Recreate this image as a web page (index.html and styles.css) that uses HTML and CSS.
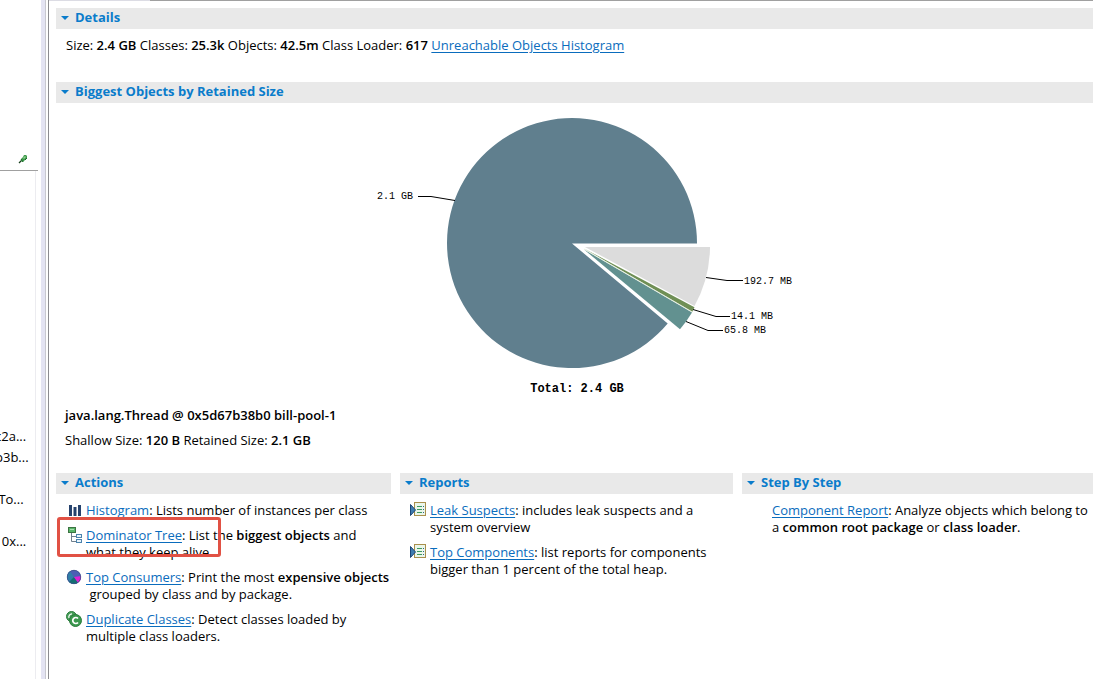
FILE: index.html
```html
<!DOCTYPE html>
<html lang="en">
<head>
<meta charset="utf-8">
<title>Heap Overview</title>
<link rel="stylesheet" href="styles.css">
</head>
<body>
<div class="workbench">
  <aside class="side">
    <div class="side-top">
      <svg class="pin" viewBox="0 0 10 10" width="10" height="10" aria-hidden="true">
        <path d="M1 9L4 6" stroke="#173f1c" stroke-width="1.2"/>
        <path d="M3 5L5 3L6 1L8 1L9 2L9 4L7 6L5 8L3 7Z" fill="#3f9a4c"/>
        <path d="M5 4L7 2L8 3L6 5Z" fill="#8fd08f"/>
        <path d="M3 5L5 8M9 4L7 6" stroke="#1c6a2a" fill="none"/>
      </svg>
    </div>
    <ul class="side-list">
      <li>c2a...</li>
      <li>p3b...</li>
      <li></li>
      <li>&nbsp;To...</li>
      <li></li>
      <li>&nbsp;&nbsp;0x...</li>
    </ul>
  </aside>
  <div class="sash"></div>
  <main class="main">
    <section>
      <h2 class="bar"><button class="toggle" type="button"><span class="tri"></span>Details</button></h2>
      <p class="summary">Size: <b>2.4 GB</b> Classes: <b>25.3k</b> Objects: <b>42.5m</b> Class Loader: <b>617</b> <a href="#">Unreachable Objects Histogram</a></p>
    </section>
    <section>
      <h2 class="bar"><button class="toggle" type="button"><span class="tri"></span>Biggest Objects by Retained Size</button></h2>
      <svg class="chart" viewBox="315 110 519 290" width="519" height="290" role="img" aria-label="Biggest objects by retained size">
        <path d="M572 243.500H697A125 125 0 1 0 667.700 323.500Z" fill="#607f8e"/>
        <path d="M585 247H710A125 125 0 0 1 694.500 306Z" fill="#dcdcdc"/>
        <path d="M584 248.500L694.500 307.300L692.300 311.800Z" fill="#6f8f55"/>
        <path d="M584 249.500L692 312.500A125 125 0 0 1 680 329.300Z" fill="#629190"/>
        <path d="M584 249L692.300 312" stroke="#e3eedb" stroke-width=".7"/>
        <g class="leads">
          <path d="M418 196.500H431L455 200.500"/>
          <path d="M706 277.500L727 280.500H743"/>
          <path d="M693 309.500L716 316.500H730"/>
          <path d="M686 321.500L708 330.500H723"/>
        </g>
        <g class="labels">
          <text x="377" y="199">2.1 GB</text>
          <text x="744" y="284">192.7 MB</text>
          <text x="731" y="319">14.1 MB</text>
          <text x="724" y="333">65.8 MB</text>
        </g>
        <text class="total" x="577" y="392">Total: 2.4 GB</text>
      </svg>
      <p class="object"><b>java.lang.Thread @ 0x5d67b38b0 bill-pool-1</b></p>
      <p class="object">Shallow Size: <b>120 B</b> Retained Size: <b>2.1 GB</b></p>
    </section>
    <div class="columns">
      <section>
        <h2 class="bar"><button class="toggle" type="button"><span class="tri"></span>Actions</button></h2>
        <ul class="links">
          <li>
            <svg class="icon" viewBox="0 0 16 16" aria-hidden="true"><path d="M3 3h3v11H3zM7.500 5h3v9h-3zM12 3h3v11h-3z" fill="#26426d"/></svg>
            <p><a href="#">Histogram</a>: Lists number of instances per class</p>
          </li>
          <li>
            <svg class="icon" viewBox="0 0 16 16" aria-hidden="true">
              <path d="M5.500 6V14.500H10M5.500 9.500H10" fill="none" stroke="#6f7f8d"/>
              <rect x="2.500" y=".5" width="7" height="5" fill="#58b568" stroke="#3c7342"/>
              <path d="M4 2h4v1H4z" fill="#a6dfae"/>
              <rect x="10.500" y="7.500" width="5" height="3" fill="#e8f3fb" stroke="#4c83ad"/>
              <rect x="10.500" y="12.500" width="5" height="3" fill="#e8f3fb" stroke="#4c83ad"/>
            </svg>
            <p><a href="#">Dominator Tree</a>: List the <b>biggest objects</b> and<br>what they keep alive.</p>
            <span class="highlight"></span>
          </li>
          <li>
            <svg class="icon" viewBox="0 0 16 16" aria-hidden="true">
              <circle cx="8" cy="8" r="7" fill="#4c5fb4"/>
              <path d="M8 8L4 2.300A7 7 0 0 0 4 13.700Z" fill="#2f7fa9"/>
              <path d="M8 8L3 13A7 7 0 0 0 12 13.700Z" fill="#146d72"/>
              <path d="M8 8L15 7A7 7 0 0 1 12 13.700Z" fill="#e020d4"/>
              <circle cx="8" cy="8" r="6.700" fill="none" stroke="#3c4f86" stroke-width=".8"/>
            </svg>
            <p><a href="#">Top Consumers</a>: Print the most <b>expensive objects</b><br>&nbsp;grouped by class and by package.</p>
          </li>
          <li>
            <svg class="icon" viewBox="0 0 16 16" aria-hidden="true">
              <circle cx="5.500" cy="5.500" r="5" fill="#48a05a" stroke="#2b7c3d"/>
              <path d="M3 7A3.200 3.200 0 0 1 6 2.800" fill="none" stroke="#fff" stroke-width="1.200"/>
              <circle cx="9.500" cy="9.500" r="6" fill="#3b984e" stroke="#2b7c3d"/>
              <path d="M12 7.500A3 3 0 1 0 12 11.500" fill="none" stroke="#fff" stroke-width="1.700"/>
            </svg>
            <p><a href="#">Duplicate Classes</a>: Detect classes loaded by<br>multiple class loaders.</p>
          </li>
        </ul>
      </section>
      <section>
        <h2 class="bar"><button class="toggle" type="button"><span class="tri"></span>Reports</button></h2>
        <ul class="links">
          <li>
            <svg class="icon" viewBox="0 0 16 16" aria-hidden="true">
              <rect x="4.500" y=".5" width="11" height="13" fill="#eaf6ea" stroke="#a98f4c"/>
              <path d="M7 4.500h5M7 7.500h5M7 10.500h5" stroke="#3f9a5e"/><path d="M13 4.500h1M13 7.500h1M13 10.500h1" stroke="#315f8d"/>
              <path d="M.5 2.500V13.500L5.500 8Z" fill="#3f7db0" stroke="#1d4777"/>
            </svg>
            <p><a href="#">Leak Suspects</a>: includes leak suspects and a<br>system overview</p>
          </li>
          <li>
            <svg class="icon" viewBox="0 0 16 16" aria-hidden="true">
              <rect x="4.500" y=".5" width="11" height="13" fill="#eaf6ea" stroke="#a98f4c"/>
              <path d="M7 4.500h5M7 7.500h5M7 10.500h5" stroke="#3f9a5e"/><path d="M13 4.500h1M13 7.500h1M13 10.500h1" stroke="#315f8d"/>
              <path d="M.5 2.500V13.500L5.500 8Z" fill="#3f7db0" stroke="#1d4777"/>
            </svg>
            <p><a href="#">Top Components</a>: list reports for components<br>bigger than 1 percent of the total heap.</p>
          </li>
        </ul>
      </section>
      <section>
        <h2 class="bar"><button class="toggle" type="button"><span class="tri"></span>Step By Step</button></h2>
        <ul class="links">
          <li>
            <span class="icon"></span>
            <p><a href="#">Component Report</a>: Analyze objects which belong to<br>a <b>common root package</b> or <b>class loader</b>.</p>
          </li>
        </ul>
      </section>
    </div>
  </main>
</div>
</body>
</html>
```
FILE: styles.css
```css
* { box-sizing: border-box; }
body {
  margin: 0;
  background: #fff;
  color: #000;
  font: 13px/17px "Open Sans", "Noto Sans", sans-serif;
}
h2, p, ul { margin: 0; padding: 0; font-size: inherit; }
ul { list-style: none; }
b { font-weight: 600; }
a { color: #0a6cbd; text-underline-offset: 2px; }

.workbench { display: flex; min-height: 100vh; overflow: hidden; }
.side { flex: 0 0 41px; padding-right: 3px; overflow: hidden; }
.side-top {
  height: 171px;
  padding: 154px 0 0 18px;
  border-bottom: 1px solid #a0a0a0;
}
.pin { display: block; }
.side-list {
  min-height: calc(100vh - 171px);
  margin: 0 2px 0 -5px;
  padding-top: 255px;
  border-right: 1px solid #ececf0;
  line-height: 21px;
  white-space: nowrap;
}
.side-list li { height: 21px; }
.sash {
  flex: 0 0 5px;
  margin-right: 2px;
  background: #e4e4f3;
  border-right: 1px solid #c8c8d0;
}
.main {
  flex: 1;
  min-width: 0;
  padding: 8px 0 0 7px;
  background: linear-gradient(to right, #dcdce4 101px, #a0a0a0 101px) top / 100% 1px no-repeat;
  border-left: 1px solid #8c8c90;
}

.bar { height: 21px; background: #e9e9e9; }
.toggle {
  display: flex;
  align-items: center;
  gap: 6px;
  height: 19px;
  padding: 0 5px;
  border: 0;
  background: none;
  color: #0a7ccb;
  font: inherit;
  font-weight: 700;
}
.tri {
  border: 4px solid transparent;
  border-top-color: #0a7ccb;
  border-bottom: 0;
}
.summary { padding: 8px 10px 28px; }
.chart { display: block; margin: 7px auto; }
.leads { fill: none; stroke: #000; }
.labels { font: 10px "Liberation Mono", monospace; }
.total { font: bold 12px "Liberation Mono", monospace; text-anchor: middle; }
.object { padding-left: 9px; margin-bottom: 8px; }

.columns {
  display: grid;
  grid-template-columns: 335fr 333fr 351fr;
  gap: 9px;
  margin-top: 24px;
}
.links { display: grid; gap: 8px; padding: 8px 0 0 10px; }
.links li { position: relative; display: flex; gap: 4px; white-space: nowrap; }
.icon { flex: none; width: 16px; height: 16px; }
.highlight {
  position: absolute;
  top: -10px;
  left: -9px;
  width: 164px;
  height: 40px;
  border: 3px solid #e15144;
  border-radius: 3px;
}
```
